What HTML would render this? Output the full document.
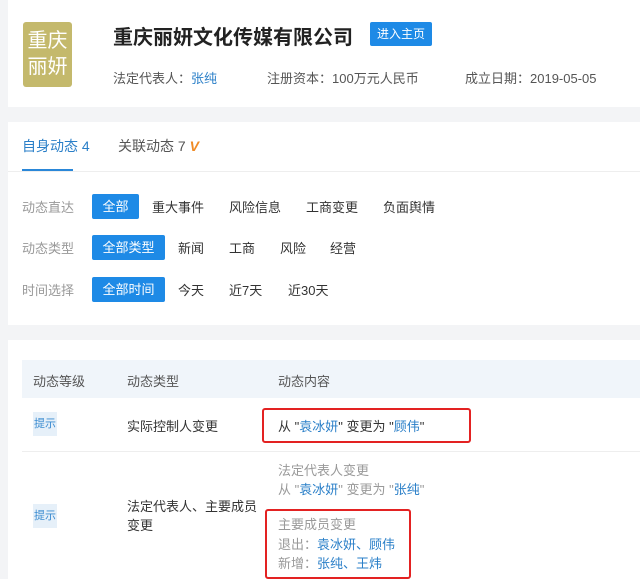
<!DOCTYPE html>
<html><head><meta charset="utf-8"><style>
*{margin:0;padding:0;box-sizing:border-box}
body{width:640px;height:579px;overflow:hidden;background:#f3f4f6;font-family:"Liberation Sans","Noto Sans CJK SC",sans-serif;position:relative;color:#333}
.a{position:absolute;white-space:nowrap}
.card{position:absolute;background:#fff;left:8px;right:0}
.f{font-size:13px;color:#333}
.g{color:#999}
.b{color:#2a7fc8}
.btn{position:absolute;background:#1e8ae6;color:#fff;font-size:13px;text-align:center;line-height:25px;height:25px;border-radius:2px}
</style></head><body>
<div class="card" style="top:0;height:107px"></div>
<div class="a" style="left:23px;top:22px;width:49px;height:65px;background:#c4b96c;border-radius:3px;color:#fff;font-size:20px;line-height:26px;text-align:center;padding-top:6px">重庆<br>丽妍</div>
<div class="a" style="left:113px;top:21px;font-size:20px;font-weight:bold;color:#222">重庆丽妍文化传媒有限公司</div>
<div class="a" style="left:370px;top:22px;width:62px;height:24px;background:#1e8ae6;color:#fff;font-size:12px;line-height:24px;text-align:center;border-radius:2px">进入主页</div>
<div class="a f" style="left:113px;top:68px;color:#555">法定代表人：<span class="b">张纯</span></div>
<div class="a f" style="left:267px;top:68px;color:#555">注册资本：100万元人民币</div>
<div class="a f" style="left:465px;top:68px;color:#555">成立日期：2019-05-05</div>

<div class="card" style="top:122px;height:203px"></div>
<div class="a" style="left:22px;top:136px;font-size:14px;color:#2a7fc8">自身动态 4</div>
<div class="a" style="left:22px;top:169px;width:51px;height:2px;background:#2a87d8"></div>
<div class="a" style="left:8px;right:0;top:171px;height:1px;background:#eee"></div>
<div class="a" style="left:118px;top:136px;font-size:14px;color:#555">关联动态 7 <span style="color:#f08a24;font-weight:bold;font-style:italic">V</span></div>

<div class="a f g" style="left:22px;top:197px">动态直达</div>
<div class="btn" style="left:92px;top:194px;width:47px">全部</div>
<div class="a f" style="left:152px;top:197px">重大事件</div>
<div class="a f" style="left:229px;top:197px">风险信息</div>
<div class="a f" style="left:306px;top:197px">工商变更</div>
<div class="a f" style="left:383px;top:197px">负面舆情</div>

<div class="a f g" style="left:22px;top:238px">动态类型</div>
<div class="btn" style="left:92px;top:235px;width:73px">全部类型</div>
<div class="a f" style="left:178px;top:238px">新闻</div>
<div class="a f" style="left:229px;top:238px">工商</div>
<div class="a f" style="left:280px;top:238px">风险</div>
<div class="a f" style="left:330px;top:238px">经营</div>

<div class="a f g" style="left:22px;top:280px">时间选择</div>
<div class="btn" style="left:92px;top:277px;width:73px">全部时间</div>
<div class="a f" style="left:178px;top:280px">今天</div>
<div class="a f" style="left:229px;top:280px">近7天</div>
<div class="a f" style="left:288px;top:280px">近30天</div>

<div class="card" style="top:340px;height:239px"></div>
<div class="a" style="left:22px;right:0;top:360px;height:38px;background:#f0f5fa"></div>
<div class="a f" style="left:33px;top:371px;color:#555">动态等级</div>
<div class="a f" style="left:127px;top:371px;color:#555">动态类型</div>
<div class="a f" style="left:278px;top:371px;color:#555">动态内容</div>

<div class="a" style="left:33px;top:412px;width:24px;height:24px;background:#e6f0f9;color:#3a8bd0;font-size:11px;line-height:24px;text-align:center">提示</div>
<div class="a f" style="left:127px;top:416px">实际控制人变更</div>
<div class="a f" style="left:278px;top:416px">从 "<span class="b">袁冰妍</span>" 变更为 "<span class="b">顾伟</span>"</div>
<div class="a" style="left:262px;top:408px;width:209px;height:35px;border:2px solid #e32222;border-radius:3px"></div>
<div class="a" style="left:22px;right:0;top:451px;height:1px;background:#eee"></div>

<div class="a" style="left:33px;top:504px;width:24px;height:24px;background:#e6f0f9;color:#3a8bd0;font-size:11px;line-height:24px;text-align:center">提示</div>
<div class="a f" style="left:127px;top:497px;line-height:19px">法定代表人、主要成员<br>变更</div>
<div class="a f g" style="left:278px;top:461px;line-height:19px">法定代表人变更<br>从 "<span class="b">袁冰妍</span>" 变更为 "<span class="b">张纯</span>"</div>
<div class="a f g" style="left:278px;top:515px;line-height:19.5px">主要成员变更<br>退出：<span class="b">袁冰妍、顾伟</span><br>新增：<span class="b">张纯、王炜</span></div>
<div class="a" style="left:265px;top:509px;width:146px;height:70px;border:2px solid #e32222;border-radius:3px"></div>
</body></html>
